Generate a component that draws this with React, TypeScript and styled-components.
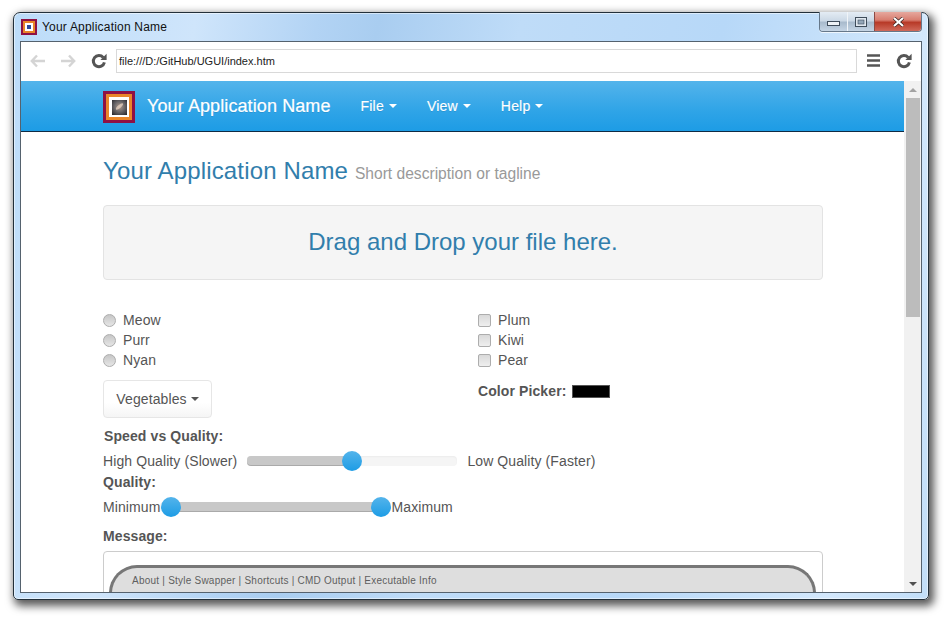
import React from "react";
import styled, { createGlobalStyle } from "styled-components";

const Global = createGlobalStyle`
  html, body { margin: 0; padding: 0; background: #fff; }
  body { width: 947px; height: 619px; overflow: hidden; font-family: "Liberation Sans", Arial, sans-serif; }
`;

const Desktop = styled.div`
  padding: 12px 0 0 13px;
`;

const Win = styled.div`
  width: 916px;
  height: 588px;
  box-sizing: border-box;
  border: 1px solid #23303a;
  border-radius: 7px 7px 5px 5px;
  padding: 0 6px 6px;
  display: flex;
  flex-direction: column;
  position: relative;
  background: linear-gradient(100deg, #bcdcf9 0%, #cfe5fb 18%, #b2d3f4 30%, #a9cdf0 36%, #bfdcf8 50%, #b7d8f8 70%, #d3e8fc 90%, #c2def8 100%);
  box-shadow: 0 0 0 1px rgba(255,255,255,.5) inset, 3px 4px 9px 2px rgba(0,0,0,.65);
`;

const TitleBar = styled.div`
  height: 28px;
  flex: none;
  display: flex;
  align-items: center;
  gap: 5px;
  padding-left: 1px;
  font-size: 12px;
  letter-spacing: 0.2px;
  color: #111;
  box-sizing: border-box;
  padding-bottom: 1px;
`;

const Controls = styled.div`
  position: absolute;
  top: -1px;
  right: 6px;
  height: 19px;
  display: flex;
  border: 1px solid #66788a;
  border-top: none;
  border-radius: 0 0 4px 4px;
  overflow: hidden;
  box-shadow: 0 1px 0 rgba(255,255,255,.7);
`;

const Ctl = styled.div<{ $w: number; $close?: boolean }>`
  width: ${(p) => p.$w}px;
  display: flex;
  align-items: center;
  justify-content: center;
  border-left: ${(p) => (p.$close ? "1px solid #8b4a44" : "1px solid #f0f4f8")};
  background: ${(p) =>
    p.$close
      ? "linear-gradient(#e6a89e 0%, #d87e70 42%, #b83a28 55%, #d0695a 100%)"
      : "linear-gradient(#e4ecf4 0%, #ccd9e6 45%, #a9bbcd 55%, #c5d5e5 100%)"};
  &:first-child { border-left: none; }
`;

const Inner = styled.div`
  flex: 1;
  min-height: 0;
  border: 1px solid #55626e;
  background: #fff;
  display: flex;
  flex-direction: column;
`;

const Toolbar = styled.div`
  height: 39px;
  box-sizing: border-box;
  flex: none;
  display: flex;
  align-items: center;
  background: #fff;
  padding: 0 6px 2px 6px;
`;

const ToolIcon = styled.svg<{ $ml: number }>`
  margin-left: ${(p) => p.$ml}px;
  flex: none;
  display: block;
`;

const Url = styled.div`
  width: 741px;
  height: 24px;
  box-sizing: border-box;
  margin-left: 9px;
  border: 1px solid #d9d9d9;
  font-size: 11px;
  line-height: 22px;
  padding-left: 2px;
  color: #222;
`;

const Viewport = styled.div`
  flex: 1;
  min-height: 0;
  display: flex;
`;

const Page = styled.div`
  flex: 1;
  min-width: 0;
  overflow: hidden;
`;

const Scrollbar = styled.div`
  width: 17px;
  flex: none;
  background: #f1f1f1;
  display: flex;
  flex-direction: column;
  align-items: center;
  box-sizing: border-box;
  padding: 0 1px;
`;

const Arrow = styled.div<{ $down?: boolean }>`
  height: 17px;
  flex: none;
  display: flex;
  align-items: center;
  justify-content: center;
  margin-top: ${(p) => (p.$down ? "auto" : "0")};
  &::after {
    content: "";
    border-left: 4px solid transparent;
    border-right: 4px solid transparent;
    ${(p) => (p.$down ? "border-top: 4px solid #505050;" : "border-bottom: 4px solid #a3a3a3;")}
  }
`;

const Thumb = styled.div`
  width: 14px;
  height: 219px;
  flex: none;
  background: #bcbcbc;
`;

const Nav = styled.nav`
  height: 51px;
  box-sizing: border-box;
  border-bottom: 1px solid #0f2b44;
  background: linear-gradient(#54b4eb 0%, #2fa4e7 60%, #1d9ce5 100%);
  padding-left: 82px;
  display: flex;
  align-items: center;
  color: #fff;
  text-shadow: 0 1px 0 rgba(0,0,0,.1);
`;

const LogoSvg = styled.svg`
  flex: none;
  display: block;
  margin-top: 1px;
`;

const FaviconSvg = styled.svg`
  flex: none;
  display: block;
`;

const Brand = styled.div`
  font-size: 18px;
  letter-spacing: 0.1px;
  margin-left: 12px;
  margin-right: 15px;
  font-weight: 400;
  -webkit-text-stroke: 0.2px #fff;
`;

const Menu = styled.div`
  font-size: 14px;
  letter-spacing: 0.2px;
  padding: 0 15px;
  display: flex;
  align-items: center;
  gap: 5px;
  -webkit-text-stroke: 0.15px #fff;
`;

const Caret = styled.span<{ $c?: string }>`
  display: inline-block;
  width: 0;
  height: 0;
  border-left: 4px solid transparent;
  border-right: 4px solid transparent;
  border-top: 4px solid ${(p) => p.$c ?? "#fff"};
`;

const Main = styled.div`
  padding-left: 82px;
  width: 720px;
  color: #555;
  font-size: 14px;
  line-height: 20px;
  letter-spacing: 0.1px;
`;

const Heading = styled.h1`
  margin: 26px 0 0;
  font-size: 24px;
  line-height: 26px;
  font-weight: 400;
  letter-spacing: 0.15px;
  color: #317eac;
  small { font-size: 15.6px; color: #999; margin-left: 0; letter-spacing: 0; }
`;

const Drop = styled.div`
  margin-top: 18px;
  height: 75px;
  box-sizing: border-box;
  border: 1px solid #e3e3e3;
  border-radius: 4px;
  padding-bottom: 2px;
  background: #f5f5f5;
  color: #317eac;
  font-size: 24px;
  letter-spacing: 0;
  display: flex;
  align-items: center;
  justify-content: center;
`;

const Columns = styled.div`
  margin-top: 30px;
  display: grid;
  grid-template-columns: 375px 1fr;
`;

const Check = styled.div`
  display: flex;
  align-items: center;
  height: 20px;
  gap: 7px;
`;

const Radio = styled.span`
  width: 13px;
  height: 13px;
  box-sizing: border-box;
  border-radius: 50%;
  border: 1px solid #adadad;
  background: linear-gradient(#c6c6c6, #e6e6e6);
`;

const Box = styled.span`
  width: 13px;
  height: 13px;
  box-sizing: border-box;
  border-radius: 2px;
  border: 1px solid #adadad;
  background: linear-gradient(#d9d9d9, #efefef);
`;

const DropBtn = styled.div`
  margin-top: 10px;
  width: 109px;
  height: 38px;
  box-sizing: border-box;
  border: 1px solid #e6e6e6;
  border-radius: 4px;
  background: linear-gradient(#fff, #fff 60%, #f5f5f5);
  display: flex;
  align-items: center;
  justify-content: center;
  gap: 4px;
  color: #555;
`;

const PickerRow = styled.div`
  margin-top: 11px;
  display: flex;
  align-items: center;
  gap: 6px;
`;

const Swatch = styled.span`
  width: 38px;
  height: 13px;
  box-sizing: border-box;
  background: #000;
  border: 1px solid #555;
`;

const Label = styled.div<{ $mt: number; $ml?: number }>`
  margin-top: ${(p) => p.$mt}px;
  margin-left: ${(p) => p.$ml ?? 0}px;
  font-weight: 700;
`;

const SliderRow = styled.div<{ $gap: number }>`
  margin-top: 5px;
  display: flex;
  align-items: center;
  gap: ${(p) => p.$gap}px;
  height: 20px;
`;

const Track = styled.div<{ $w: number }>`
  position: relative;
  width: ${(p) => p.$w}px;
  height: 10px;
  flex: none;
  border-radius: 4px;
  background: #f5f5f5;
  box-shadow: inset 0 1px 2px rgba(0,0,0,.04);
`;

const Fill = styled.div<{ $from: number; $to: number }>`
  position: absolute;
  top: 0;
  bottom: 0;
  left: ${(p) => p.$from}px;
  width: ${(p) => p.$to - p.$from}px;
  background: #c8c8c8;
  border-radius: 4px 0 0 4px;
  box-shadow: inset 0 -1px 0 rgba(0,0,0,.15);
`;

const Handle = styled.div<{ $x: number }>`
  position: absolute;
  top: -5px;
  left: ${(p) => p.$x - 10}px;
  width: 20px;
  height: 20px;
  border-radius: 50%;
  background: linear-gradient(#54b4eb, #1d9ce5);
`;

const MessageBox = styled.div`
  margin-top: 5px;
  height: 80px;
  box-sizing: border-box;
  border: 1px solid #ccc;
  border-radius: 4px;
  padding: 13px 6px 0 4px;
`;

const Pill = styled.div`
  height: 60px;
  box-sizing: border-box;
  border: 3px solid #777;
  border-bottom: none;
  border-radius: 28px 28px 0 0;
  background: #dedede;
  padding: 6px 20px;
  margin-left: 1px;
  font-size: 10px;
  line-height: 14px;
  letter-spacing: 0.23px;
  color: #5f5f5f;
`;

const Logo = ({ size }: { size: number }) => (
  <LogoSvg width={size} height={size} viewBox="0 0 32 32">
    <defs>
      <radialGradient id="nebula" cx="0.5" cy="0.45" r="0.72">
        <stop offset="0" stopColor="#b09a8c" />
        <stop offset="0.45" stopColor="#6d6a6c" />
        <stop offset="1" stopColor="#26262c" />
      </radialGradient>
    </defs>
    <rect width="32" height="32" fill="#8f1144" />
    <rect x="3" y="3" width="26" height="26" fill="#e9862a" />
    <rect x="6" y="6" width="20" height="20" fill="#fff" />
    <rect x="9" y="9" width="15" height="15" fill="url(#nebula)" />
    <ellipse cx="16.5" cy="15.5" rx="4.5" ry="1.5" fill="#e8d3c2" opacity="0.75" transform="rotate(-40 16.5 15.5)" />
  </LogoSvg>
);

const Favicon = () => (
  <FaviconSvg width="16" height="16" viewBox="0 0 16 16">
    <rect width="16" height="16" fill="#8f1144" />
    <rect x="2" y="2" width="12" height="12" fill="#e9862a" />
    <rect x="4" y="4" width="8" height="8" fill="#fff" />
    <rect x="6" y="6" width="4" height="4" fill="#2b4a9e" />
  </FaviconSvg>
);

const ArrowL = ({ ml, flip }: { ml: number; flip?: boolean }) => (
  <ToolIcon $ml={ml} width="16" height="14" viewBox="0 0 16 14" transform={flip ? "scale(-1 1)" : undefined}>
    <path d="M7 1.5 L1.8 7 L7 12.5 M2 7 H15" fill="none" stroke="#d4d4d4" strokeWidth="2.4" />
  </ToolIcon>
);

const Reload = ({ ml }: { ml: number }) => (
  <ToolIcon $ml={ml} width="16" height="16" viewBox="0 0 16 16">
    <path d="M12.2 4.4 A5.6 5.6 0 1 0 13.4 9.4" fill="none" stroke="#555" strokeWidth="3" />
    <path d="M9.4 7 L15.6 7 L15.6 0.8 Z" fill="#555" />
  </ToolIcon>
);

const Hamburger = ({ ml }: { ml: number }) => (
  <ToolIcon $ml={ml} width="13" height="13" viewBox="0 0 13 13">
    <path d="M0 1.5 H13 M0 6.5 H13 M0 11.5 H13" stroke="#555" strokeWidth="2.6" />
  </ToolIcon>
);

export default function App() {
  return (
    <>
      <Global />
      <Desktop>
        <Win>
          <TitleBar>
            <Favicon />
            <span>Your Application Name</span>
          </TitleBar>
          <Controls>
            <Ctl $w={27}>
              <svg width="13" height="11" viewBox="0 0 13 11"><rect x="0.5" y="5.5" width="12" height="4" fill="#eef2f6" stroke="#3f4c5a" /></svg>
            </Ctl>
            <Ctl $w={26}>
              <svg width="12" height="10" viewBox="0 0 12 10"><rect x="0.5" y="0.5" width="11" height="9" fill="#dfe7ef" stroke="#3f4c5a" /><rect x="3" y="3" width="6" height="4" fill="#93a6b8" stroke="#3f4c5a" strokeWidth="0.6" /></svg>
            </Ctl>
            <Ctl $w={46} $close>
              <svg width="13" height="10" viewBox="0 0 13 10"><path d="M2 1 L11 9 M11 1 L2 9" stroke="#3a2422" strokeWidth="3.6" /><path d="M2 1 L11 9 M11 1 L2 9" stroke="#fff" strokeWidth="2.2" /></svg>
            </Ctl>
          </Controls>
          <Inner>
            <Toolbar>
              <ArrowL ml={3} />
              <ArrowL ml={14} flip />
              <Reload ml={15} />
              <Url>file:///D:/GitHub/UGUI/index.htm</Url>
              <Hamburger ml={10} />
              <Reload ml={16} />
            </Toolbar>
            <Viewport>
              <Page>
                <Nav>
                  <Logo size={32} />
                  <Brand>Your Application Name</Brand>
                  <Menu>File <Caret /></Menu>
                  <Menu>View <Caret /></Menu>
                  <Menu>Help <Caret /></Menu>
                </Nav>
                <Main>
                  <Heading>Your Application Name <small>Short description or tagline</small></Heading>
                  <Drop>Drag and Drop your file here.</Drop>
                  <Columns>
                    <div>
                      <Check><Radio />Meow</Check>
                      <Check><Radio />Purr</Check>
                      <Check><Radio />Nyan</Check>
                      <DropBtn>Vegetables <Caret $c="#555" /></DropBtn>
                    </div>
                    <div>
                      <Check><Box />Plum</Check>
                      <Check><Box />Kiwi</Check>
                      <Check><Box />Pear</Check>
                      <PickerRow><Label $mt={0}>Color Picker:</Label><Swatch /></PickerRow>
                    </div>
                  </Columns>
                  <Label $mt={8} $ml={1}>Speed vs Quality:</Label>
                  <SliderRow $gap={10}>
                    <span>High Quality (Slower)</span>
                    <Track $w={210}><Fill $from={0} $to={105} /><Handle $x={105} /></Track>
                    <span>Low Quality (Faster)</span>
                  </SliderRow>
                  <Label $mt={1}>Quality:</Label>
                  <SliderRow $gap={0}>
                    <span>Minimum</span>
                    <Track $w={231}><Fill $from={11} $to={221} /><Handle $x={11} /><Handle $x={221} /></Track>
                    <span>Maximum</span>
                  </SliderRow>
                  <Label $mt={9}>Message:</Label>
                  <MessageBox>
                    <Pill>About | Style Swapper | Shortcuts | CMD Output | Executable Info</Pill>
                  </MessageBox>
                </Main>
              </Page>
              <Scrollbar>
                <Arrow />
                <Thumb />
                <Arrow $down />
              </Scrollbar>
            </Viewport>
          </Inner>
        </Win>
      </Desktop>
    </>
  );
}
